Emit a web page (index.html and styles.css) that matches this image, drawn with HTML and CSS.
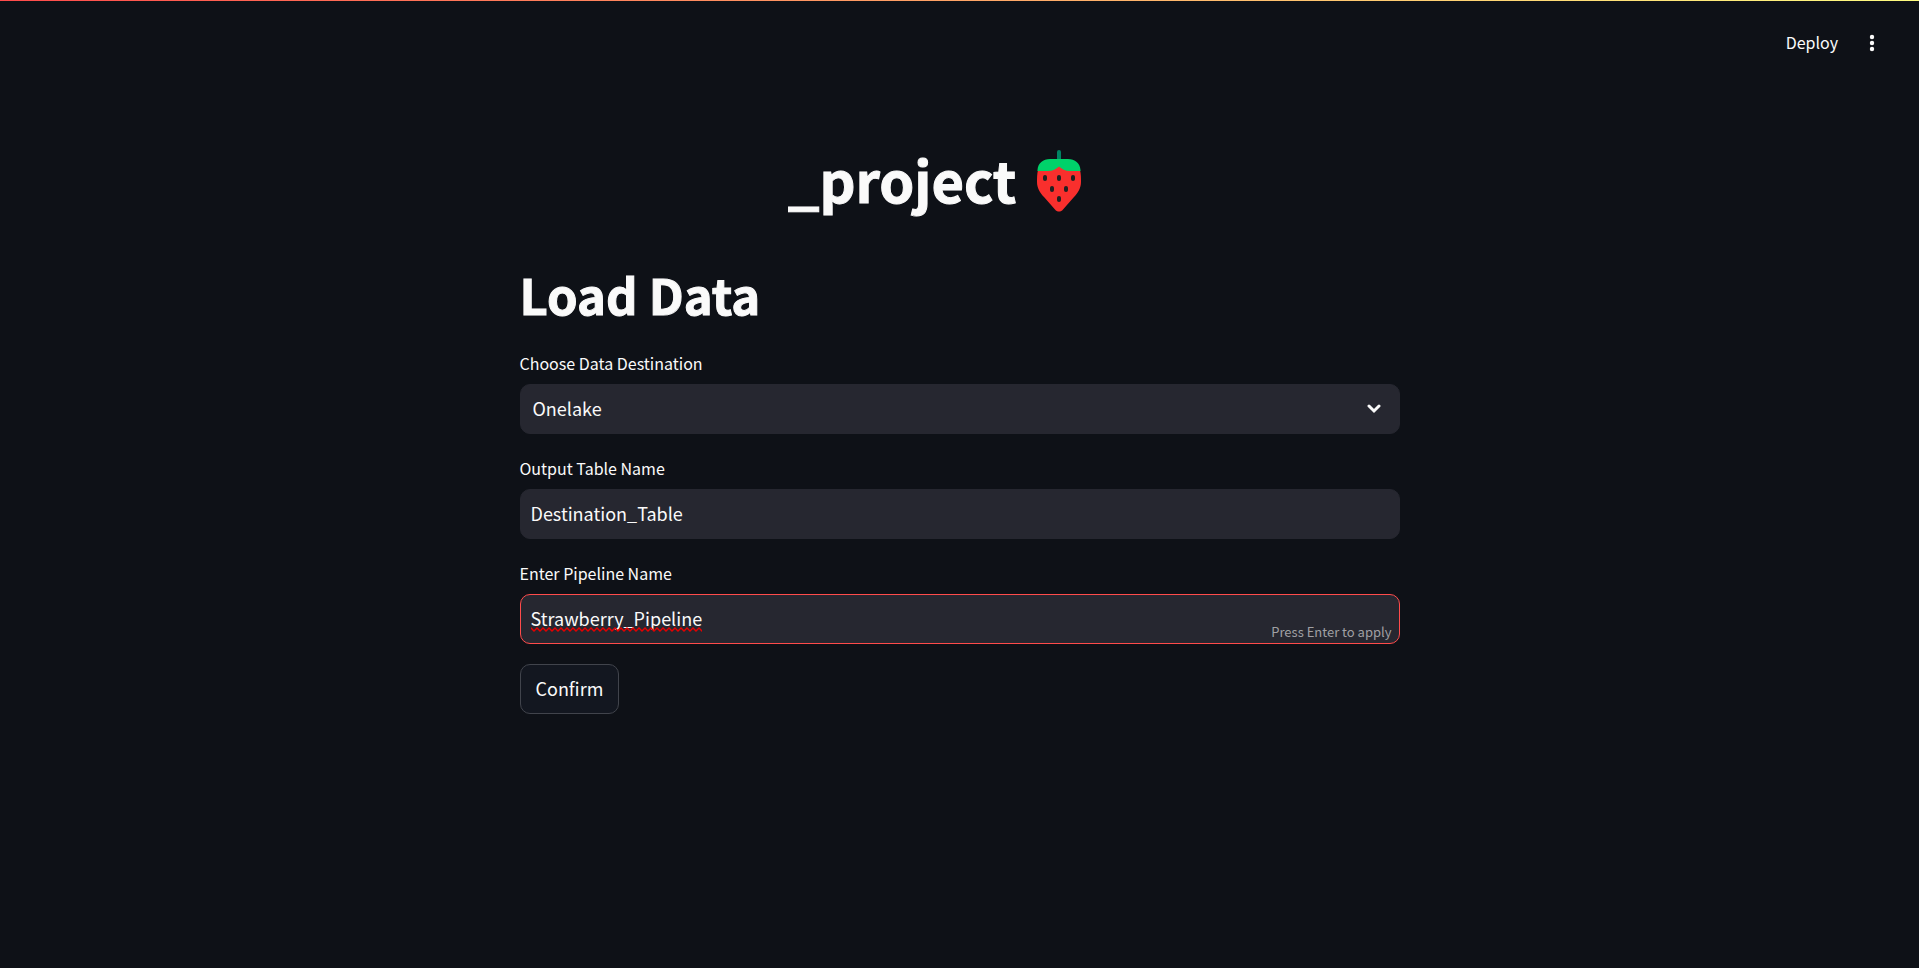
FILE: index.html
```html
<!DOCTYPE html>
<html lang="en">
<head>
<meta charset="utf-8">
<meta name="viewport" content="width=device-width, initial-scale=1">
<title>_project</title>
<link rel="stylesheet" href="styles.css">
</head>
<body>
<div class="decoration"></div>
<header class="toolbar">
  <button class="deploy" type="button">Deploy</button>
  <button class="menu" type="button" aria-label="Main menu">
    <svg viewBox="0 0 20 22" width="20" height="22" aria-hidden="true"><circle cx="10" cy="6" r="2.200"/><circle cx="10" cy="12" r="2.200"/><circle cx="10" cy="18" r="2.200"/></svg>
  </button>
</header>
<main class="content">
  <h1 class="brand">
    <span>_project</span>
    <svg class="berry" viewBox="0 0 44 62" width="44" height="62" role="img" aria-label="Strawberry">
      <rect x="20" y="0" width="4" height="12" rx="2" fill="#008463"/>
      <path d="M1 20C0 24 0 28 0 32C0 38 3 43 7 47L18 59.500C20 62.300 24 62.300 26 59.500L37 47C41 43 44 38 44 32C44 28 44 24 43 20L30 14H14Z" fill="#f92f2d"/>
      <path d="M0.500 21V20C1 13 6 9 13 9H31C38 9 43 13 43.500 20V21H33C28 21 25 19 22 16.500C19 19 16 21 11 21Z" fill="#00d26a"/>
      <g fill="#212121">
        <rect x="6" y="25" width="4" height="6" rx="2"/><rect x="20" y="25" width="4" height="6" rx="2"/><rect x="34" y="25" width="4" height="6" rx="2"/>
        <rect x="13" y="36" width="4" height="6" rx="2"/><rect x="27" y="36" width="4" height="6" rx="2"/>
        <rect x="20" y="46" width="4" height="6" rx="2"/>
      </g>
    </svg>
  </h1>
  <h2 class="title">Load Data</h2>
  <form class="form">
    <div class="field">
      <label for="destination">Choose Data Destination</label>
      <div class="control">
        <select class="box box-select" id="destination"><option>Onelake</option></select>
        <svg class="chevron" viewBox="0 0 14 10" width="14" height="10" aria-hidden="true"><path d="M2 2L7 7L12 2"/></svg>
      </div>
    </div>
    <div class="field">
      <label for="table">Output Table Name</label>
      <div class="control"><input class="box" id="table" type="text" value="Destination_Table"></div>
    </div>
    <div class="field">
      <label for="pipeline">Enter Pipeline Name</label>
      <div class="control">
        <input class="box box-active" id="pipeline" type="text" value="Strawberry_Pipeline" spellcheck="false">
        <svg class="squiggle" width="171" height="5" aria-hidden="true">
          <defs><pattern id="wave" width="6" height="5" patternUnits="userSpaceOnUse"><path d="M-1.500 2.500L0 1L3 4L6 1L7.500 2.500" fill="none" stroke="#e60000" stroke-width="1.400"/></pattern></defs>
          <rect width="171" height="5" fill="url(#wave)"/>
        </svg>
        <span class="hint">Press Enter to apply</span>
      </div>
    </div>
    <button class="confirm" type="button">Confirm</button>
  </form>
</main>
</body>
</html>
```
FILE: styles.css
```css
* { box-sizing: border-box; }
body {
  margin: 0;
  min-height: 100vh;
  background: #0e1117;
  color: #fafafa;
  font-family: "Noto Sans CJK SC", "Noto Sans", sans-serif;
  font-size: 18px;
  line-height: 30px;
}
button, input, select { font: inherit; color: inherit; }
.decoration {
  height: 1px;
  background: linear-gradient(90deg, #ff4b4b, #fffd80);
}
.toolbar {
  display: flex;
  justify-content: flex-end;
  align-items: center;
  gap: 24px;
  height: 82px;
  padding: 0 37px;
}
.deploy, .menu {
  padding: 0;
  border: 0;
  background: none;
  font-size: 16px;
}
.menu { display: flex; }
.menu svg { fill: #fafafa; }
.content {
  width: 100%;
  max-width: 880px;
  margin: 0 auto;
  padding-top: 67px;
}
.brand, .title {
  margin: 0;
  font-weight: 700;
  -webkit-text-stroke: 1px #fafafa;
}
.brand {
  display: flex;
  justify-content: center;
  align-items: flex-start;
  gap: 21px;
  padding-right: 50px;
  font-size: 56px;
  line-height: 58px;
}
.title {
  margin: 48px 0 21px;
  font-size: 49px;
  line-height: 68px;
}
.form, .field { display: flex; flex-direction: column; }
.form { gap: 20px; align-items: flex-start; }
.field { gap: 7px; width: 100%; }
.field label { font-size: 16px; line-height: 28px; }
.control { position: relative; }
.box {
  display: block;
  width: 100%;
  height: 50px;
  padding: 0 10px 2px;
  border: 1px solid #262730;
  border-radius: 10px;
  outline: 0;
  background: #262730;
}
.box-select { appearance: none; padding: 0 12px 2px; }
.box-active { border-color: #ff4b4b; }
.squiggle {
  position: absolute;
  left: 11px;
  bottom: 12px;
  pointer-events: none;
}
.chevron {
  position: absolute;
  top: 20px;
  right: 19px;
  fill: none;
  stroke: #fafafa;
  stroke-width: 3;
  stroke-linecap: round;
  pointer-events: none;
}
.hint {
  position: absolute;
  right: 8px;
  bottom: 2px;
  color: #a0a0a4;
  font-size: 13px;
  line-height: 20px;
}
.confirm {
  height: 50px;
  padding: 0 15px 2px;
  border: 1px solid #41444c;
  border-radius: 10px;
  background: #131720;
}
```
